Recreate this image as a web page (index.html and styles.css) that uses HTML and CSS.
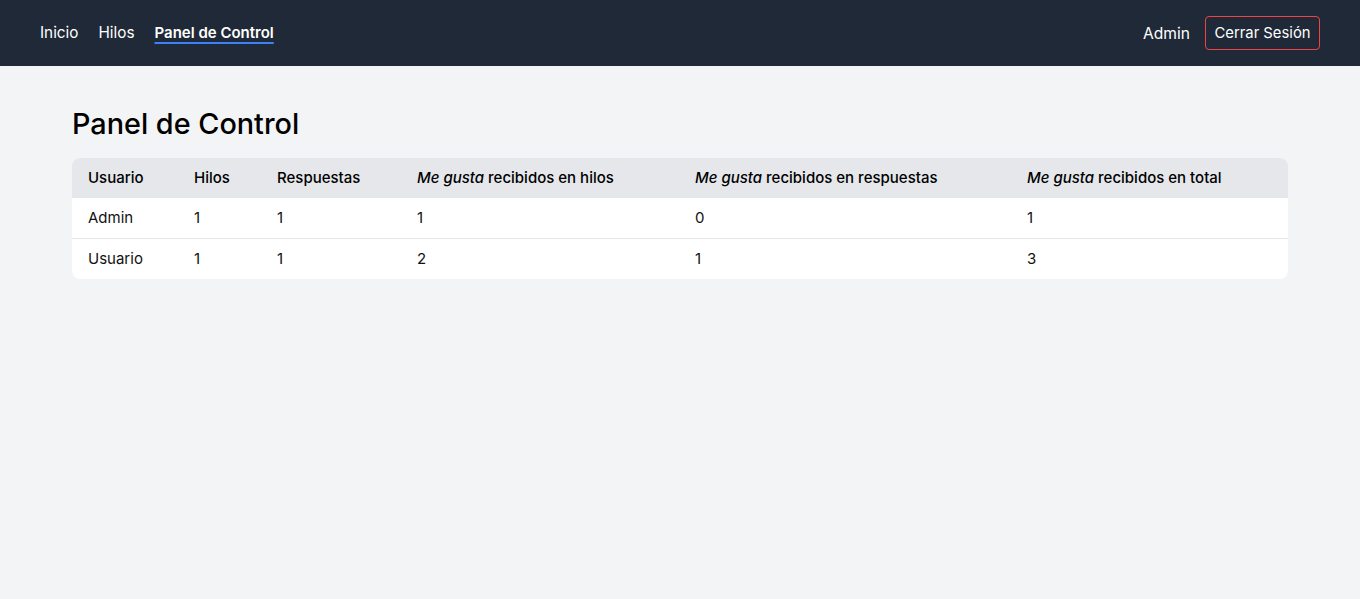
FILE: index.html
```html
<!DOCTYPE html>
<html lang="es">
<head>
<meta charset="utf-8">
<title>Panel de Control</title>
<link rel="stylesheet" href="styles.css">
</head>
<body>
<nav class="navbar">
  <div class="nav-left">
    <a class="nav-link" href="#">Inicio</a>
    <a class="nav-link" href="#">Hilos</a>
    <a class="nav-link active" href="#">Panel de Control</a>
  </div>
  <div class="nav-right">
    <span class="nav-user">Admin</span>
    <button class="logout">Cerrar Sesión</button>
  </div>
</nav>
<main class="container">
  <h1 class="title">Panel de Control</h1>
  <div class="table-wrap">
    <table class="stats">
      <colgroup>
        <col class="c1"><col class="c2"><col class="c3"><col class="c4"><col class="c5"><col class="c6">
      </colgroup>
      <thead>
        <tr>
          <th>Usuario</th>
          <th>Hilos</th>
          <th>Respuestas</th>
          <th><em>Me gusta</em> recibidos en hilos</th>
          <th><em>Me gusta</em> recibidos en respuestas</th>
          <th><em>Me gusta</em> recibidos en total</th>
        </tr>
      </thead>
      <tbody>
        <tr><td>Admin</td><td>1</td><td>1</td><td>1</td><td>0</td><td>1</td></tr>
        <tr><td>Usuario</td><td>1</td><td>1</td><td>2</td><td>1</td><td>3</td></tr>
      </tbody>
    </table>
  </div>
</main>
</body>
</html>
```

FILE: styles.css
```css
* { box-sizing: border-box; }
html, body { margin: 0; padding: 0; }
body {
  background: #f3f4f6;
  font-family: Inter, "Noto Sans", sans-serif;
  color: #111827;
  min-height: 599px;
}
.navbar {
  background: #1f2937;
  height: 66px;
  padding: 0 40px;
  display: flex;
  align-items: center;
  justify-content: space-between;
}
.nav-left { display: flex; align-items: baseline; gap: 20px; }
.nav-link {
  color: #ffffff;
  text-decoration: none;
  font-size: 15.3px;
  line-height: 24px;
}
.nav-link.active {
  font-weight: 600;
  font-size: 15px;
  text-decoration: underline;
  text-decoration-color: #3b82f6;
  text-decoration-thickness: 2px;
  text-underline-offset: 4px;
}
.nav-right { display: flex; align-items: center; gap: 15px; }
.nav-user { color: #fff; font-size: 15.6px; }
.logout {
  background: transparent;
  color: #fff;
  border: 1px solid #ef4444;
  border-radius: 4px;
  font-family: inherit;
  font-size: 14.8px;
  height: 34px;
  padding: 0 8.5px;
}
.container {
  max-width: 1280px;
  margin: 0 auto;
  padding: 40px 32px 0;
}
.title {
  margin: 0 0 16px;
  font-size: 28.8px;
  line-height: 36px;
  font-weight: 500;
  color: #000;
}
.table-wrap {
  background: #fff;
  border-radius: 8px;
  overflow: hidden;
}
.stats {
  width: 100%;
  border-collapse: collapse;
  table-layout: fixed;
  font-size: 15px;
}
.c1 { width: 106px; }
.c2 { width: 83px; }
.c3 { width: 140px; }
.c4 { width: 278px; }
.c5 { width: 332px; }
.c6 { width: 277px; }
.stats th {
  background: #e5e7eb;
  text-align: left;
  font-weight: 500;
  height: 40px;
  padding: 0 16px 1px;
  color: #000;
}
.stats td {
  height: 40px;
  padding: 0 16px;
  color: #111;
}
.stats tbody tr + tr td { border-top: 1px solid #e5e7eb; height: 41px; }
```
